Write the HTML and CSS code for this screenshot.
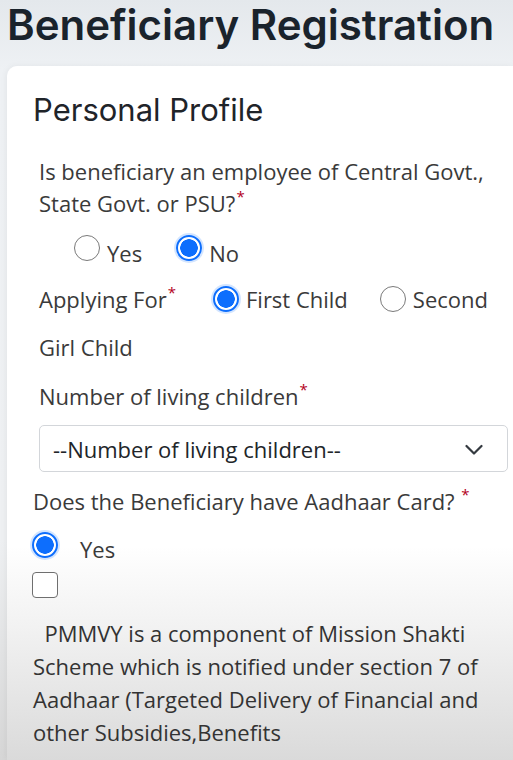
FILE: index.html
```html
<!DOCTYPE html>
<html lang="en">
<head>
<meta charset="utf-8">
<title>Beneficiary Registration</title>
<link rel="stylesheet" href="styles.css">
</head>
<body>
<h1 class="page-title">Beneficiary Registration</h1>
<section class="card">
  <h2 class="section-title">Personal Profile</h2>

  <p class="question indent first-q">Is beneficiary an employee of Central Govt., State Govt. or PSU?<span class="req">*</span></p>

  <div class="radio-row govt">
    <label class="opt"><span class="radio"></span><span>Yes</span></label>
    <label class="opt"><span class="radio checked"></span><span>No</span></label>
  </div>

  <p class="applying"><span class="lbl">Applying For<span class="req">*</span></span><label class="opt-inline first"><span class="radio checked"></span>First Child</label><label class="opt-inline second"><span class="radio"></span>Second Girl Child</label></p>

  <p class="question indent children-label">Number of living children<span class="req">*</span></p>

  <div class="select">
    <span class="select-text">--Number of living children--</span>
    <svg class="chevron" width="18" height="12" viewBox="0 0 18 12"><polyline points="1.5,2 9,9.5 16.5,2" fill="none" stroke="#343a40" stroke-width="2.2" stroke-linecap="round" stroke-linejoin="round"/></svg>
  </div>

  <p class="question aadhaar">Does the Beneficiary have Aadhaar Card? <span class="req">*</span></p>

  <div class="radio-row aadhaar-yes">
    <label class="opt wide"><span class="radio checked"></span><span>Yes</span></label>
  </div>

  <div class="check-row"><span class="checkbox"></span></div>

  <p class="notice">&nbsp;&nbsp;PMMVY is a component of Mission Shakti Scheme which is notified under section 7 of Aadhaar (Targeted Delivery of Financial and other Subsidies,Benefits</p>
</section>
</body>
</html>
```

FILE: styles.css
```css
html, body {
  margin: 0;
  padding: 0;
}
body {
  width: 513px;
  height: 760px;
  overflow: hidden;
  background: linear-gradient(to bottom, #e4e8ec 0, #eef1f4 70px, #eef0f2 540px, #d6d6d6 760px);
  font-family: "Open Sans", "Liberation Sans", sans-serif;
  color: #3a3a3a;
}
.page-title {
  margin: 0;
  padding: 0 0 0 7px;
  font-family: Inter, "Liberation Sans", sans-serif;
  font-weight: 600;
  font-size: 42px;
  line-height: 50px;
  color: #1a232c;
  white-space: nowrap;
}
.card {
  margin: 16px 0 0 7px;
  height: 694px;
  box-sizing: border-box;
  padding: 25px 0 0 26px;
  border-radius: 10px 0 0 0;
  background: linear-gradient(to bottom, #ffffff 0, #ffffff 480px, #f2f2f2 560px, #dadada 694px);
  box-shadow: -1px 0 6px rgba(0, 0, 0, 0.05);
}
.section-title {
  margin: 0;
  font-family: Inter, "Liberation Sans", sans-serif;
  font-weight: 400;
  font-size: 31px;
  line-height: 38px;
  color: #1f2429;
}
.question {
  margin: 0;
  font-size: 22px;
  line-height: 32px;
  width: 470px;
}
.indent {
  margin-left: 6px;
}
.first-q {
  margin-top: 26px;
}
.req {
  display: inline-block;
  color: #b3001b;
  font-size: 15px;
  line-height: 12px;
  vertical-align: 10px;
  margin-left: 1px;
}
.radio-row {
  display: flex;
  align-items: flex-start;
  font-size: 22px;
  line-height: 32px;
}
.govt {
  margin: 18px 0 0 41px;
  gap: 34px;
}
.opt {
  display: flex;
  align-items: flex-start;
  gap: 7px;
}
.opt.wide {
  gap: 22px;
}
.radio {
  box-sizing: border-box;
  width: 26px;
  height: 26px;
  border-radius: 50%;
  border: 1.5px solid #7a7a7a;
  background: #fff;
  margin-top: -2px;
  flex: none;
}
.radio.checked {
  border: 2px solid #0d6efd;
  background: radial-gradient(circle, #0d6efd 0, #0d6efd 8.5px, #ffffff 9px, #ffffff 100%);
  box-shadow: 0 0 0 2px rgba(13, 110, 253, 0.18);
}
.applying {
  margin: 6px 0 0 6px;
  font-size: 22px;
  line-height: 48px;
  width: 470px;
}
.lbl {
  margin-right: 37px;
}
.opt-inline .radio {
  display: inline-block;
  vertical-align: -4px;
  margin: 0 7px 0 0;
}
.first {
  margin-right: 32px;
}
.children-label {
  margin-top: 9px;
}
.select {
  margin-top: 13px;
  margin-left: 6px;
  width: 469px;
  height: 47px;
  box-sizing: border-box;
  border: 1px solid #d3d6da;
  border-radius: 5px;
  background: #fff;
  display: flex;
  align-items: center;
  justify-content: space-between;
  padding: 0 24px 0 13px;
}
.select-text {
  font-size: 22px;
  color: #212529;
}
.chevron {
  display: block;
  margin-top: 2px;
}
.aadhaar {
  margin-top: 13px;
  width: 480px;
}
.aadhaar-yes {
  margin-top: 16px;
  margin-left: -1px;
}
.aadhaar-yes .radio {
  margin-top: -1px;
}
.check-row {
  margin-top: 7px;
  margin-left: -1px;
}
.checkbox {
  display: block;
  box-sizing: border-box;
  width: 26px;
  height: 26px;
  border: 1.5px solid #6f6f6f;
  border-radius: 4px;
  background: #fff;
}
.notice {
  margin: 19px 0 0 0;
  width: 465px;
  font-size: 22px;
  line-height: 33px;
  color: #333;
}
```
